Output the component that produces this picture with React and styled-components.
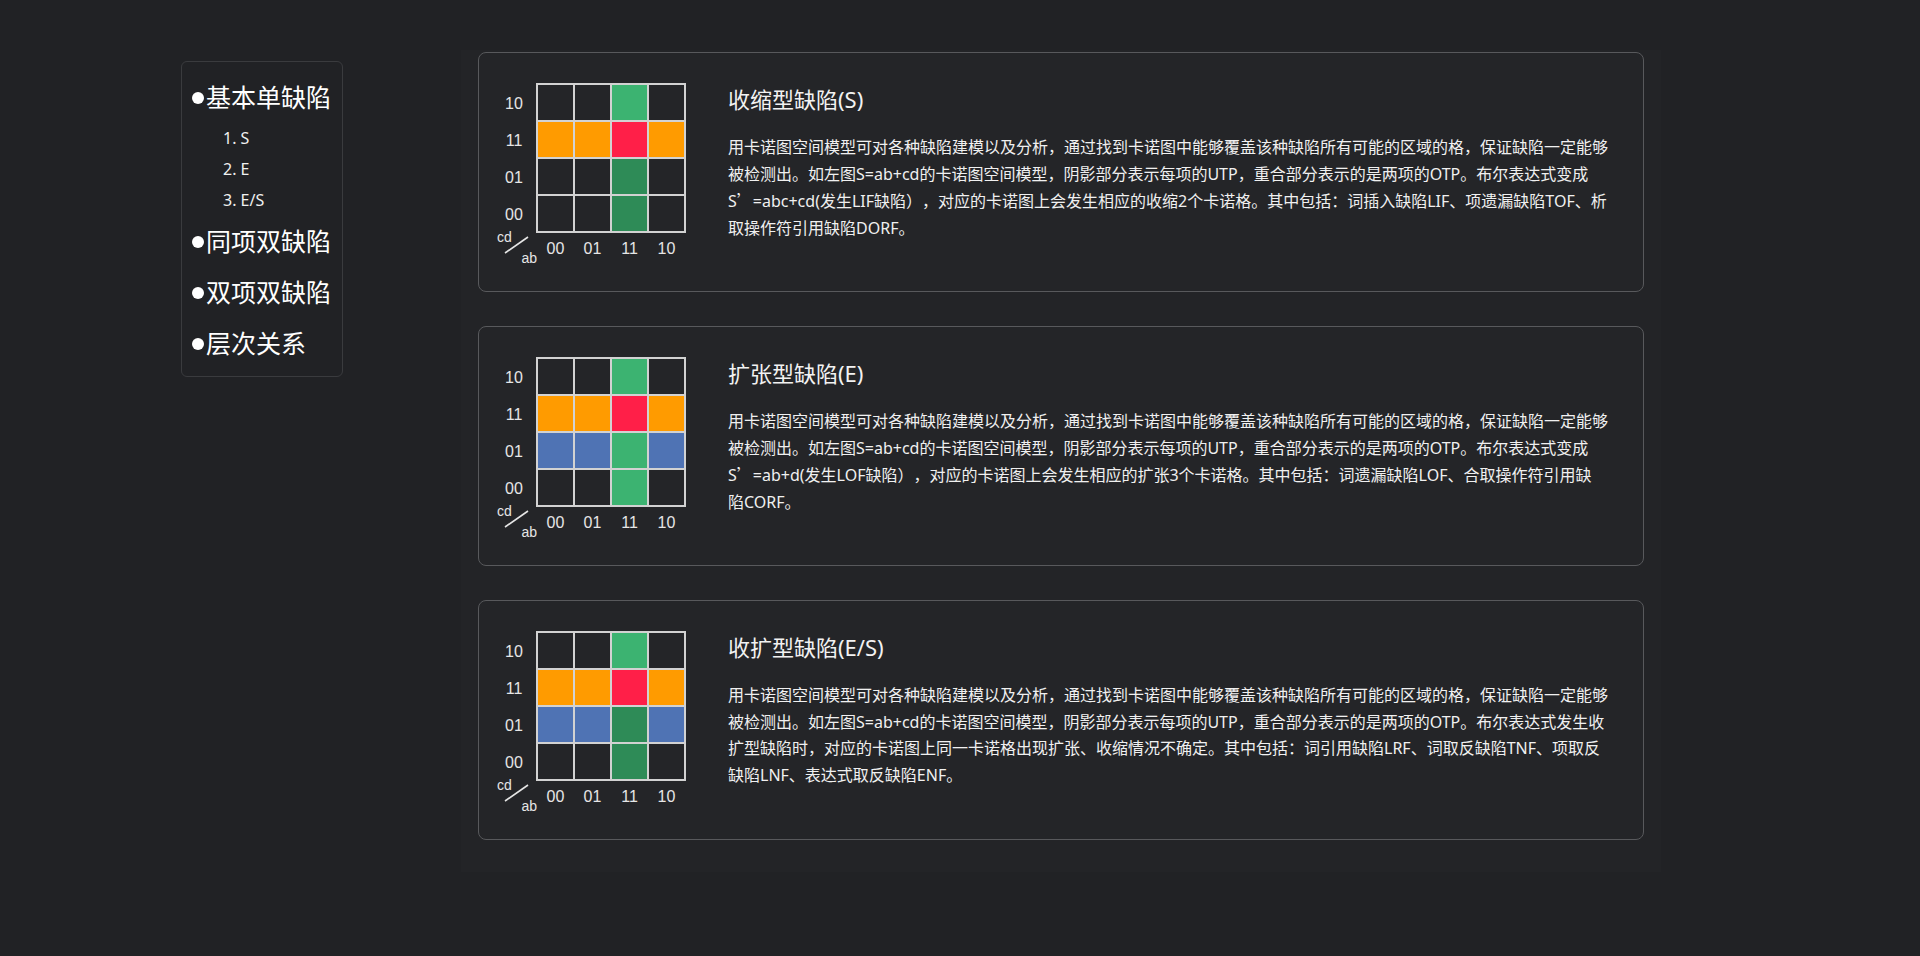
import React from "react";
import styled, { createGlobalStyle } from "styled-components";

const GlobalStyle = createGlobalStyle`
  html, body {
    margin: 0;
    padding: 0;
    background: #212225;
  }
  body {
    font-family: "Noto Sans", "Noto Sans CJK SC", sans-serif;
    color: #ffffff;
  }
`;

const Page = styled.div`
  display: flex;
  align-items: flex-start;
  gap: 118px;
  padding: 50px 0 0 181px;
  min-height: 956px;
  box-sizing: border-box;
`;

const Sidebar = styled.nav`
  margin-top: 11px;
  width: 162px;
  box-sizing: border-box;
  border: 1px solid #3a3b3e;
  border-radius: 6px;
  padding: 10px 8px 7px 10px;
  display: flex;
  flex-direction: column;
`;

const MainItem = styled.div`
  display: flex;
  align-items: center;
  gap: 2px;
  font-size: 25px;
  line-height: 51px;
  color: #ffffff;
  white-space: nowrap;
  &::before {
    content: "";
    width: 12px;
    height: 12px;
    border-radius: 50%;
    background: #ffffff;
    flex: none;
  }
`;

const SubList = styled.div`
  display: flex;
  flex-direction: column;
  padding-left: 31px;
`;

const SubItem = styled.div`
  font-size: 16px;
  line-height: 31px;
  color: #f0f0f0;
`;

const Content = styled.main`
  width: 1200px;
  box-sizing: border-box;
  padding: 2px 17px 32px;
  background: #232427;
  display: flex;
  flex-direction: column;
  gap: 34px;
`;

const Card = styled.section`
  height: 240px;
  box-sizing: border-box;
  border: 1px solid #58595c;
  border-radius: 8px;
  background: #242528;
  display: flex;
  align-items: flex-start;
  padding: 30px 30px 0 19px;
`;

const KMap = styled.div`
  display: grid;
  grid-template-columns: 38px 150px;
  grid-template-rows: 150px 32px;
  font-family: "Liberation Sans", Arial, sans-serif;
  color: #e6e6e6;
  flex: none;
`;

const RowLabels = styled.div`
  display: grid;
  grid-template-rows: repeat(4, 1fr);
  padding: 3px 6px 0 0;
  font-size: 16px;
  align-items: center;
  justify-items: center;
`;

const Cells = styled.div`
  display: grid;
  grid-template-columns: repeat(4, 35px);
  grid-template-rows: repeat(4, 35px);
  gap: 2px;
  padding: 2px;
  background: #d2d2d2;
`;

const COLORS = {
  n: "#242528",
  o: "#ff9b00",
  r: "#ff1f48",
  g: "#3cb371",
  d: "#2e8b57",
  b: "#4f73b4",
};

const Cell = styled.div`
  background: ${(p) => COLORS[p.$c]};
`;

const Corner = styled.div`
  position: relative;
  font-size: 14px;
`;

const CornerText = styled.span`
  position: absolute;
  line-height: 16px;
  ${(p) => (p.$pos === "top" ? "top: -4px; left: -1px;" : "top: 17px; right: -1px;")}
`;

const CornerLine = styled.svg`
  position: absolute;
  inset: 0;
  overflow: visible;
`;

const ColLabels = styled.div`
  display: grid;
  grid-template-columns: repeat(4, 35px);
  column-gap: 2px;
  padding: 0 2px;
  font-size: 16px;
  line-height: 32px;
  text-align: center;
`;

const TextCol = styled.div`
  margin-left: 42px;
  width: 890px;
`;

const Title = styled.h2`
  margin: 1px 0 0;
  font-size: 22px;
  line-height: 30px;
  font-weight: 400;
  color: #f2f2f2;
`;

const Para = styled.p`
  margin: 20px 0 0;
  font-size: 16px;
  line-height: 26.7px;
  color: #f0f0f0;
  text-spacing-trim: space-all;
`;

const Wide = styled.span`
  font-family: "Noto Sans CJK SC", sans-serif;
`;

const NoBreak = styled.span`
  white-space: nowrap;
`;

const ROWS = ["10", "11", "01", "00"];
const COLS = ["00", "01", "11", "10"];

function KarnaughMap({ grid }) {
  return (
    <KMap>
      <RowLabels>
        {ROWS.map((r) => (
          <span key={r}>{r}</span>
        ))}
      </RowLabels>
      <Cells>
        {grid.flatMap((row, i) =>
          row.split("").map((c, j) => <Cell key={`${i}-${j}`} $c={c} />)
        )}
      </Cells>
      <Corner>
        <CornerText $pos="top">cd</CornerText>
        <CornerLine width="38" height="32">
          <line x1="7" y1="20" x2="30" y2="4" stroke="#e6e6e6" strokeWidth="1.6" />
        </CornerLine>
        <CornerText $pos="bottom">ab</CornerText>
      </Corner>
      <ColLabels>
        {COLS.map((c, i) => (
          <span key={i}>{c}</span>
        ))}
      </ColLabels>
    </KMap>
  );
}

const INTRO =
  "用卡诺图空间模型可对各种缺陷建模以及分析，通过找到卡诺图中能够覆盖该种缺陷所有可能的区域的格，保证缺陷一定能够被检测出。如左图S=ab+cd的卡诺图空间模型，阴影部分表示每项的UTP，重合部分表示的是两项的OTP。";

const CARDS = [
  {
    title: "收缩型缺陷(S)",
    grid: ["nngn", "ooro", "nndn", "nndn"],
    before: INTRO + "布尔表达式变成S",
    after:
      "=abc+cd(发生LIF缺陷），对应的卡诺图上会发生相应的收缩2个卡诺格。其中包括：词插入缺陷LIF、项遗漏缺陷TOF、析取操作符引用缺陷DORF。",
  },
  {
    title: "扩张型缺陷(E)",
    grid: ["nngn", "ooro", "bbgb", "nngn"],
    before: INTRO + "布尔表达式变成S",
    after:
      "=ab+d(发生LOF缺陷），对应的卡诺图上会发生相应的扩张3个卡诺格。其中包括：词遗漏缺陷LOF、合取操作符引用缺",
    tail: "陷CORF。",
  },
  {
    title: "收扩型缺陷(E/S)",
    grid: ["nngn", "ooro", "bbdb", "nndn"],
    before:
      INTRO +
      "布尔表达式发生收扩型缺陷时，对应的卡诺图上同一卡诺格出现扩张、收缩情况不确定。其中包括：词引用缺陷LRF、词取反缺陷TNF、项取反缺陷LNF、表达式取反缺陷ENF。",
  },
];

export default function App() {
  return (
    <>
      <GlobalStyle />
      <Page>
        <Sidebar>
          <MainItem>基本单缺陷</MainItem>
          <SubList>
            <SubItem>1. S</SubItem>
            <SubItem>2. E</SubItem>
            <SubItem>3. E/S</SubItem>
          </SubList>
          <MainItem>同项双缺陷</MainItem>
          <MainItem>双项双缺陷</MainItem>
          <MainItem>层次关系</MainItem>
        </Sidebar>
        <Content>
          {CARDS.map((c) => (
            <Card key={c.title}>
              <KarnaughMap grid={c.grid} />
              <TextCol>
                <Title>{c.title}</Title>
                <Para>
                  {c.before}
                  {c.after && <Wide>’</Wide>}
                  {c.after}
                  {c.tail && <NoBreak>{c.tail}</NoBreak>}
                </Para>
              </TextCol>
            </Card>
          ))}
        </Content>
      </Page>
    </>
  );
}
